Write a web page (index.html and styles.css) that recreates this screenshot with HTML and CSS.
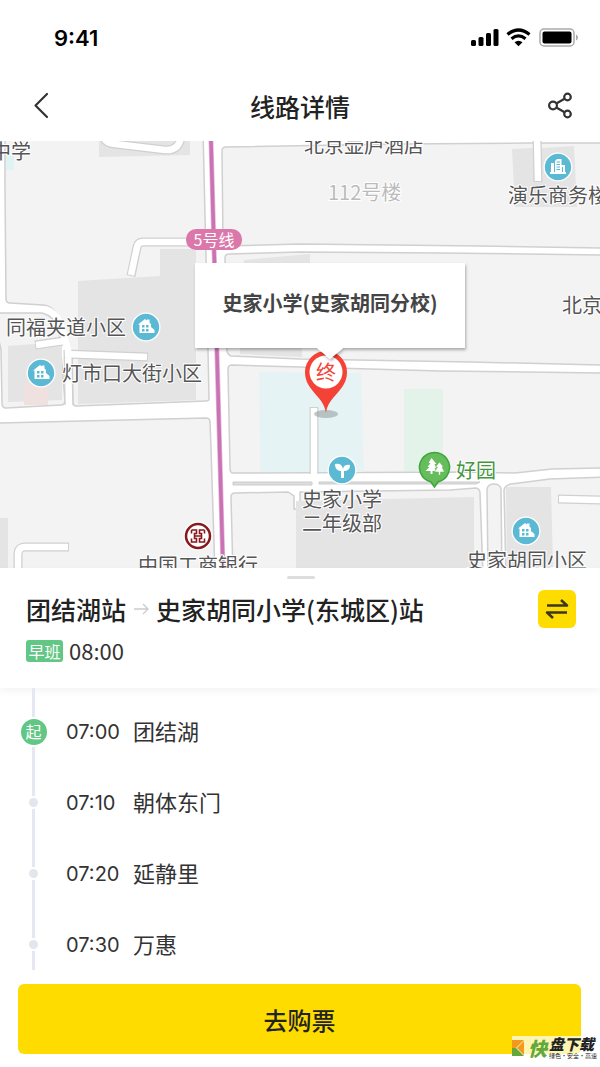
FILE: index.html
```html
<!DOCTYPE html>
<html lang="zh-CN">
<head>
<meta charset="utf-8">
<meta name="viewport" content="width=device-width, initial-scale=1">
<title>线路详情</title>
<link rel="stylesheet" href="styles.css">
</head>
<body>
<div class="app">
  <div class="status-bar">
    <span class="clock">9:41</span>
    <svg class="status-icons" width="108" height="20" viewBox="0 0 108 20" aria-hidden="true">
      <rect x="1" y="12" width="5" height="6" rx="1.5"/>
      <rect x="8.500" y="9" width="5" height="9" rx="1.500"/>
      <rect x="16" y="5" width="5" height="13" rx="1.500"/>
      <rect x="23.500" y="1" width="5" height="17" rx="1.500"/>
      <g fill="none" stroke="#000" stroke-width="3.200">
        <path d="M37.500 6.500Q48.500-2.500 59.500 6.500"/>
        <path d="M41.500 10.800Q48.500 5 55.500 10.800"/>
      </g>
      <path d="M44.500 14.300Q48.500 11.200 52.500 14.300L48.500 18.300Z"/>
      <rect x="70" y="1" width="34" height="17" rx="4" fill="none" stroke="#aaa" stroke-width="1.500"/>
      <rect x="72.500" y="3.500" width="29" height="12" rx="2"/>
      <path d="M106 6.500Q108 7.500 108 9.500T106 12.500Z" fill="#aaa"/>
    </svg>
  </div>

  <header class="nav">
    <button class="icon-button" type="button" aria-label="返回">
      <svg width="30" height="30" viewBox="0 0 30 30"><path d="M22 3 10.500 14.500 22 26" fill="none" stroke="#333" stroke-width="2.200" stroke-linecap="round" stroke-linejoin="round"/></svg>
    </button>
    <h1 class="nav-title">线路详情</h1>
    <button class="icon-button" type="button" aria-label="分享">
      <svg width="30" height="30" viewBox="0 0 30 30"><g fill="none" stroke="#333" stroke-width="2.200"><circle cx="8" cy="14.500" r="3.900"/><circle cx="22.500" cy="6" r="3.300"/><circle cx="22.500" cy="23" r="3.300"/><path d="M11.300 12.500 19.600 7.700M11.300 16.500 19.600 21.300"/></g></svg>
    </button>
  </header>

  <main class="map">
    <svg class="map-canvas" viewBox="0 141 600 427" preserveAspectRatio="xMidYMid slice" role="img" aria-label="地图">
      <defs>
        <g id="poi-home">
          <circle r="14.500" fill="#fff"/><circle r="13.200" fill="#5bb9d3"/>
          <path fill="#fff" d="M-8-2.500-1-8 1-6.500V-7.500H3.500V-4.500L5-3V0L8.500 3V6H-6.500V-2.500Z"/>
          <path fill="#5bb9d3" d="M-4-2h2.500V.500H-4zM0-2h2.500V.500H0zM-4 2h2.500V4.500H-4zM0 2h2.500V4.500H0z"/>
        </g>
        <filter id="popup-shadow" x="-10%" y="-10%" width="120%" height="130%"><feDropShadow dx="1" dy="2" stdDeviation="1.500" flood-opacity=".3"/></filter>
      </defs>

      <rect y="141" width="600" height="427" fill="#fff"/>
      <g class="blocks">
        <path d="M5 130H203L207 300 209 399Q209 401 206 401L76 406Q73 406 73 402L72 355Q69 350 67 345L61 322Q55 306 43 305L10 303Q6 303 6 299L5 190Z"/>
        <path d="M-5 313 42 313Q54 316 59 330L65 400Q65 405 61 405L6 408Q2 408 2 403L1 350Q-2 335-5 325Z"/>
        <path d="M-5 423 206 418Q210 418 210 422L211 448 215 575H-5Z"/>
        <path d="M222 151Q222 147 226 147L400 144 530 143 605 143V248L480 246 300 244 226 246Q224 246 223 243Z"/>
        <path d="M225 258Q225 254 229 254L300 252 440 253 605 255V365L470 362 300 359 231 356Q228 355 227 351Z"/>
        <path d="M228 369Q228 365 232 365L300 367 440 371 605 373V468L552 469 515 473 470 472 233 473Q230 473 230 468Z"/>
        <path d="M231 497Q231 493 235 493L288 492 294 496V509H300V492L450 490 476 488Q480 489 480 493L483 575H233Z"/>
        <path d="M487 489Q488 484 494 484T501 489L502 575H488Z"/>
        <path d="M504 490Q505 485 511 484L550 479 605 477V575H506Z"/>
      </g>
      <path d="M233 482H312V485H233ZM319 482H480L476 484H319Z" fill="#ddd" stroke="#ccc"/>
      <g fill="#e4e4e4">
        <path d="M99 141H190V155L99 157ZM160 249H196V400L78 404V281L160 276ZM8 346 62 342V400L8 402ZM0 518H8V568H0ZM244 260 310 254V263H244ZM240 348H302V357L240 354ZM512 149 533 148 535 178H541V148L574 146 577 207H515ZM296 501 474 497V568H296ZM506 487H551L553 568H507Z"/>
      </g>
      <path d="M6 155H14V170H6Z" fill="#e0f3f3"/>
      <path d="M24 383H48V405H24Z" fill="#f0e1e1"/>
      <path d="M259 372 361 373 364 472H260Z" fill="#e6f3f5"/>
      <path d="M404 389H443V471H404Z" fill="#e4f3ea"/>

      <g class="road-edge">
        <path d="M104 136Q104 143 115 144L165 150Q178 151 181 138"/>
        <path d="M207 242H143Q138 242 137 247L131 276"/>
        <path d="M66 354 148 357M35 345 63 341M69 405 68 350"/>
        <path d="M314 407V474"/>
        <path d="M69 547H25Q18 547 18 555V572"/>
        <path d="M537 136 538 182M558 499 605 500"/>
      </g>
      <g class="road-fill">
        <path d="M104 136Q104 143 115 144L165 150Q178 151 181 138"/>
        <path d="M209 242H143Q138 242 137 247L131 275"/>
        <path d="M65 354 147 357M36 345 64 341M69 407 68 348"/>
        <path d="M45 309Q58 313 62 328L68 350"/>
        <path d="M314 408V478"/>
        <path d="M68 547H25Q18 547 18 555V572"/>
        <path d="M537 136 538 181M559 499 605 500"/>
      </g>

      <path d="M211 141 223 568" fill="none" stroke="#e6b6d8" stroke-width="5"/>
      <path d="M211 141 223 568" fill="none" stroke="#c972b4" stroke-width="3.500"/>
      <rect x="186" y="229" width="56" height="21" rx="10" fill="#db77ab"/>
      <text class="line-label" x="214" y="246">5号线</text>

      <g class="labels">
        <text x="-9" y="159">中学</text>
        <text x="304" y="153">北京壶庐酒店</text>
        <text class="faint" x="328" y="200">112号楼</text>
        <text x="508" y="203">演乐商务楼</text>
        <text x="562" y="313">北京</text>
        <text x="6" y="335">同福夹道小区</text>
        <text x="62" y="381">灯市口大街小区</text>
        <text x="302" y="507">史家小学</text>
        <text x="302" y="531">二年级部</text>
        <text class="park" x="456" y="478">好园</text>
        <text x="138" y="573">中国工商银行</text>
        <text x="467" y="568">史家胡同小区</text>
      </g>

      <use href="#poi-home" x="146" y="327"/>
      <use href="#poi-home" x="41" y="373"/>
      <use href="#poi-home" x="526" y="531"/>
      <g transform="translate(558 167)">
        <circle r="14.500" fill="#fff"/><circle r="13.200" fill="#5bb9d3"/>
        <path fill="#fff" d="M-8 7V5H-7V-4H-4V5H-3V-6L-1-8H3.500V-2H7V5H8V7Z"/>
        <path d="M-1.500-5H2M-1.500-2.500H2M-1.500 0H2M-1.500 2.500H2M4.500 0V5" stroke="#5bb9d3" fill="none"/>
      </g>
      <g transform="translate(342 470)">
        <circle r="14.500" fill="#fff"/><circle r="13.200" fill="#5bb9d3"/>
        <path fill="#fff" d="M-7-6Q0-7 1-1 2-6 8-5 8 1 2 1V8H-1V1Q-7 1-7-6Z"/>
      </g>
      <g transform="translate(198 536)">
        <circle r="14.500" fill="#fff"/><circle r="12" fill="#fff" stroke="#85191c" stroke-width="2.500"/>
        <path d="M-6.500-6H-1.500V-2.500H-3.500V2.500H-1.500V6H-6.500V2.500M-6.500-6V-2.500M6.500-6H1.500V-2.500H3.500V2.500H1.500V6H6.500V2.500M6.500-6V-2.500M-3.500 0H3.500" fill="none" stroke="#85191c" stroke-width="1.600"/>
      </g>
      <g transform="translate(434.500 468)">
        <path d="M0 19-3.500 14A15 15 0 1 1 3.500 14Z" fill="#66bd5c" stroke="#3da63b" stroke-width="1.500"/>
        <path fill="#fff" d="M-3-10 2-4H0L2 0H0L2 3H-2V6H-4V3H-9L-5-1H-7L-4-5H-6Z"/>
        <path fill="#fff" stroke="#66bd5c" stroke-width=".6" d="M5-6 9-1H7.500L10 4H6V7H4V4H0L3-1H1Z"/>
      </g>

      <ellipse cx="326" cy="414" rx="12" ry="4" fill="#879292" opacity=".5"/>
      <path d="M326 413C324 396 305 391 305 372A21 21 0 0 1 347 372C347 391 328 396 326 413Z" fill="#f44336"/>
      <circle cx="326" cy="372" r="16.500" fill="#fff"/>
      <text class="pin-label" x="326" y="380">终</text>
      <path d="M195 263H465V348H343L330 359 317 348H195Z" fill="#fff" filter="url(#popup-shadow)"/>
      <text class="popup-label" x="330" y="311">史家小学(史家胡同分校)</text>
    </svg>
  </main>

  <section class="summary">
    <span class="grabber"></span>
    <div class="summary-row">
      <h2 class="route">
        <span>团结湖站</span>
        <svg width="16" height="16" viewBox="0 0 16 16" role="img" aria-label="至"><path d="M1 8H15M10 3 15 8 10 13" fill="none" stroke="#ccc" stroke-width="1.400"/></svg>
        <span>史家胡同小学(东城区)站</span>
      </h2>
      <button class="swap" type="button" aria-label="切换方向">
        <svg width="24" height="24" viewBox="0 0 24 24"><path d="M2 8.500H22L16 3M22 15.500H2L8 21" fill="none" stroke="#3b371d" stroke-width="2.500" stroke-linejoin="round"/></svg>
      </button>
    </div>
    <div class="shift"><span class="tag">早班</span><time>08:00</time></div>
  </section>

  <ol class="stops">
    <li class="stop"><span class="marker"><span class="start">起</span></span><time class="stop-time">07:00</time><span class="stop-name">团结湖</span></li>
    <li class="stop"><span class="marker"><span class="dot"></span></span><time class="stop-time">07:10</time><span class="stop-name">朝体东门</span></li>
    <li class="stop"><span class="marker"><span class="dot"></span></span><time class="stop-time">07:20</time><span class="stop-name">延静里</span></li>
    <li class="stop"><span class="marker"><span class="dot"></span></span><time class="stop-time">07:30</time><span class="stop-name">万惠</span></li>
  </ol>

  <footer class="footer">
    <button class="buy" type="button">去购票</button>
    <div class="watermark">
      <svg width="14" height="18" viewBox="0 0 14 18" aria-hidden="true"><path d="M0 1H12L4 9H0Z" fill="#f39a1e"/><path d="M0 9H4L12 17H0Z" fill="#62a83a"/><path d="M12 2V16L5 9Z" fill="#f39a1e"/></svg>
      <span class="mark-lead">快</span>
      <span class="mark-text"><b>盘下载</b><small>绿色·安全·高速</small></span>
    </div>
  </footer>
</div>
</body>
</html>
```

FILE: styles.css
```css
* { box-sizing: border-box; }

body {
  margin: 0;
  background: #fff;
  color: #333;
  font-family: "Noto Sans CJK SC", sans-serif;
}

button {
  border: 0;
  padding: 0;
  color: inherit;
  font-family: inherit;
  cursor: pointer;
}

.app {
  display: flex;
  flex-direction: column;
  min-height: 100vh;
}

.status-bar {
  display: flex;
  align-items: center;
  justify-content: space-between;
  height: 72px;
  padding: 4px 22px 0 54px;
}

.clock {
  color: #000;
  font: 600 22px/28px Inter, sans-serif;
}

.nav {
  display: flex;
  align-items: center;
  justify-content: space-between;
  height: 69px;
  padding: 0 25px 2px;
}

.icon-button {
  display: flex;
  background: none;
}

.nav-title,
.route {
  margin: 0;
  color: #222;
  font-size: 25px;
  font-weight: 500;
  line-height: 36px;
}

.map {
  position: relative;
  flex: 1 0 320px;
  overflow: hidden;
}

.map-canvas {
  position: absolute;
  inset: 0;
  width: 100%;
  height: 100%;
}

.blocks {
  fill: #f3f3f3;
  stroke: #d0d0d0;
  stroke-width: 1.5;
}

.road-edge {
  fill: none;
  stroke: #d0d0d0;
  stroke-width: 9;
}

.road-fill {
  fill: none;
  stroke: #fff;
  stroke-width: 6.5;
}

.labels {
  fill: #555;
  stroke: #fff;
  stroke-width: 2;
  paint-order: stroke;
  font-family: "Noto Sans CJK SC", sans-serif;
  font-size: 20px;
}

.labels .faint { fill: #bbb; }
.labels .park { fill: #45963f; }

.line-label,
.pin-label,
.popup-label {
  text-anchor: middle;
}

.line-label {
  fill: #fff;
  font-size: 16px;
}

.pin-label {
  fill: #f44336;
  font-size: 20px;
}

.popup-label {
  fill: #444;
  font-size: 20px;
  font-weight: 700;
}

.summary {
  position: relative;
  display: flex;
  flex-direction: column;
  padding: 8px 24px 24px 26px;
  background: #fff;
  box-shadow: 0 3px 8px rgba(0, 0, 0, 0.05);
}

.grabber {
  align-self: center;
  width: 28px;
  height: 3px;
  border-radius: 2px;
  background: #ddd;
}

.summary-row {
  display: flex;
  align-items: center;
  justify-content: space-between;
  padding: 11px 0 9px;
}

.route {
  display: flex;
  align-items: center;
  gap: 7px;
}

.swap {
  display: flex;
  align-items: center;
  justify-content: center;
  width: 38px;
  height: 38px;
  border-radius: 6px;
  background: #ffdc00;
}

.shift {
  display: flex;
  align-items: center;
  gap: 6px;
  font-size: 22px;
  line-height: 27px;
}

.tag {
  width: 37px;
  border-radius: 3px;
  background: #62c784;
  color: #fff;
  font-size: 16px;
  line-height: 22px;
  text-align: center;
}

.stops {
  position: relative;
  margin: 0;
  padding: 8px 20px 0;
  list-style: none;
}

.stops::before {
  content: "";
  position: absolute;
  top: 0;
  bottom: 10px;
  left: 32px;
  width: 3px;
  background: #e5e8f0;
}

.stop {
  position: relative;
  display: flex;
  align-items: center;
  height: 71px;
  font-size: 22px;
}

.marker {
  display: flex;
  justify-content: center;
  width: 27px;
  margin-right: 19px;
}

.start,
.dot {
  border-radius: 50%;
  box-shadow: 0 0 0 2px #fff;
}

.start {
  width: 26px;
  height: 26px;
  background: #62c784;
  color: #fff;
  font-size: 16px;
  line-height: 24px;
  text-align: center;
}

.dot {
  width: 9px;
  height: 9px;
  background: #e3e6ed;
}

.stop-time {
  width: 67px;
  font-family: Inter, sans-serif;
  font-size: 20px;
}

.stop-name {
  padding-bottom: 3px;
}

.footer {
  position: relative;
  padding: 4px 19px 13px 18px;
}

.buy {
  display: block;
  width: 100%;
  height: 70px;
  border-radius: 6px;
  background: #ffdc00;
  color: #222;
  font-size: 24px;
  font-weight: 500;
}

.watermark {
  position: absolute;
  right: 3px;
  bottom: 7px;
  display: flex;
  align-items: center;
  gap: 2px;
  height: 24px;
  background: rgba(255, 255, 255, 0.7);
}

.mark-lead {
  color: #62a83a;
  font-size: 19px;
  font-style: italic;
  font-weight: 900;
  line-height: 24px;
}

.mark-text {
  display: flex;
  flex-direction: column;
  color: #222;
  white-space: nowrap;
}

.mark-text b {
  font-size: 15px;
  font-style: italic;
  font-weight: 900;
  line-height: 16px;
}

.mark-text small {
  font-size: 6px;
  line-height: 8px;
}
```
